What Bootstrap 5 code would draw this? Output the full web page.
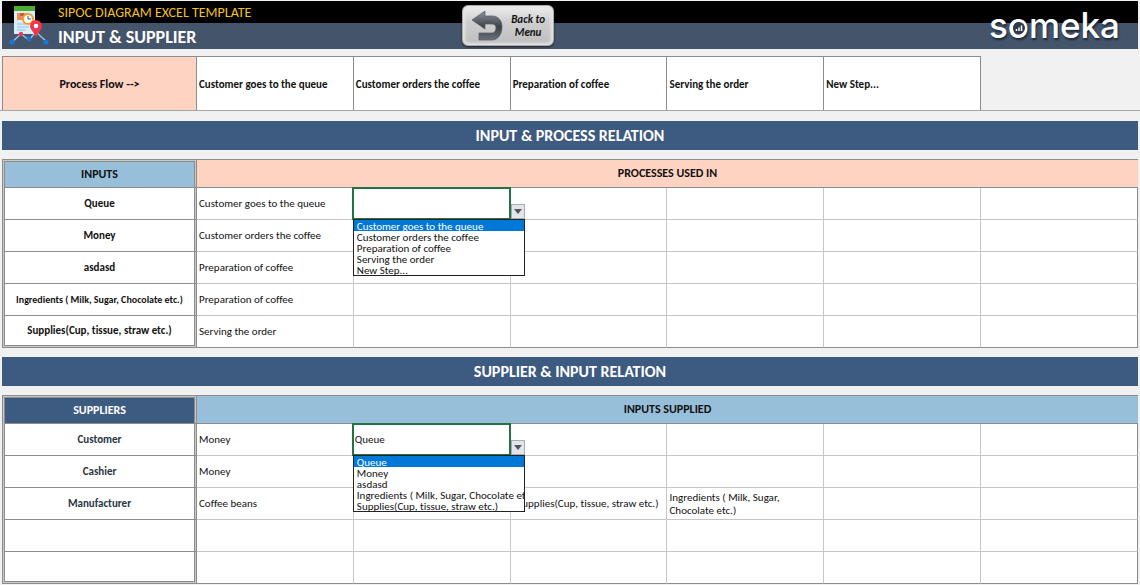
<!DOCTYPE html>
<html lang="en">
<head>
<meta charset="utf-8">
<meta name="viewport" content="width=device-width, initial-scale=1">
<title>SIPOC Diagram - Input &amp; Supplier</title>
<link href="https://cdn.jsdelivr.net/npm/bootstrap@5.3.0/dist/css/bootstrap.min.css" rel="stylesheet">
<style>
  body { font-family: Carlito, Calibri, Lato, sans-serif; font-size: 11px; line-height: 13px; color: #111; background: #f1f1f1; font-variant-ligatures: none; }
  .sheet { padding: 1px 2px 0; }
  .top-bar { height: 48px; background: linear-gradient(#000 22px, #44546a 22px); }
  .bar-start { width: 40.5%; }
  .doc-name { font-size: 14px; line-height: 23px; color: #f5c11c; }
  .page-name { font-size: 18px; line-height: 26px; color: #fff; }
  .doc-icon { width: 42px; height: 42px; margin: 3px 7px 0 7px; }
  .btn-back { width: 92px; height: 41px; margin-top: 4px; border-radius: 6px; border: 1px solid #aaa; font-size: 11px;
    background: linear-gradient(#eee, #cfcfcf 40%, #bdbdbd); box-shadow: inset 0 0 3px 2px #e6e6e6, 0 1px 2px #222; line-height: 13px; color: #111; }
  .btn-back svg { width: 32px; height: 32px; }
  .wordmark { font: 500 35px/48px Inter, sans-serif; color: #fff; margin-right: 18px; text-shadow: 1px 2px 2px #1d2838; }
  .wordmark svg { left: 5px; top: 18px; width: 12px; height: 12px; }
  .flow { margin: 7px -2px 10px; padding: 0 2px; border-bottom: 1px solid #a6a6a6; }
  .grid-table { table-layout: fixed; border-collapse: separate; border-spacing: 0; }
  .grid-table col:first-child { width: 195px; }
  .grid-table th, .grid-table td { padding: 0 2px; vertical-align: middle; border-right: 1px solid #c6c6c6; border-bottom: 1px solid #c6c6c6; }
  .grid-table.flow-table th { height: 54px; padding-top: 1px; border-color: #8c8c8c; border-bottom: 0; border-top: 1px solid #8c8c8c; background: #fff; }
  .flow-table th:first-child { border-left: 1px solid #8c8c8c; font-size: 12px; text-align: center; }
  .grid-table.flow-table th:first-child { background: #ffd3c1; }
  .grid-table.flow-table td { border: 0; }
  .band { font-size: 16px; line-height: 29px; background: #3d5a80; color: #fff; margin: 0 0 9px; }
  .relation { margin-bottom: 9px; }
  .relation thead th { height: 29px; border-top: 1px solid #8c8c8c; border-bottom-color: #8c8c8c; border-right: 0; font-size: 12px; text-align: center; }
  .relation tbody th, .relation tbody td { height: 32px; background: #fff; }
  .relation tbody tr:last-child > * { border-bottom-color: #8c8c8c; }
  .relation tbody td:last-child { border-right-color: #8c8c8c; }
  .relation tr > th:first-child { text-align: center; border: 0 solid #8c8c8c; border-width: 0 3px 1px; border-left-style: double; border-right-style: double; background-clip: padding-box; }
  .relation thead th:first-child { border-top: 3px double #8c8c8c; }
  .relation tbody tr:last-child > th:first-child { border-bottom: 3px double #8c8c8c; }
  .relation { background: #c8c8c8; }
  .bg-peach { background: #ffd3c1; }
  .bg-sky { background: #97bfd9; }
  .bg-navy { background: #3d5a80; color: #fff; }
  .fit-label { font-size: 10px; }
  .supplier-name { color: #2b3440; }
  .picker { inset: -1px -1px -1px -2px; border: 2px solid #217346; padding-left: 1px; z-index: 2; }
  .picker-btn { left: 100%; top: 15px; width: 14px; height: 15px; margin-left: 2px; padding: 0; border: 1px solid #a9adb5; background: #e1e5ec; line-height: 0; }
  .picker-list { left: -1px; top: 30px; width: 172px; height: 57px; border: 1px solid #222; border-radius: 0; padding: 0; margin: 0; background: #fff; overflow: hidden; font: inherit; color: #111; outline: 0; scrollbar-width: none; }
  .picker-list::-webkit-scrollbar { display: none; }
  .picker-list option { padding: 0 3px; height: 11px; min-height: 0; line-height: 11px; overflow: visible; white-space: nowrap; }
  .picker-list option:checked { background: #0078d7 linear-gradient(#0078d7, #0078d7); color: #fff; }
</style>
</head>
<body>
<div class="sheet">
  <header class="top-bar d-flex">
    <div class="bar-start d-flex">
      <svg class="doc-icon flex-shrink-0" viewBox="0 0 42 42" aria-hidden="true">
        <path d="M5 5h21v25H5z" fill="#d9eefb"/><path d="M5 2h21v5H5z" fill="#4caf2f"/>
        <path d="M8 9h10v7H8z" fill="#f28a55"/><path d="M11 9h4v3h-4z" fill="#c95b35"/>
        <path d="M8 20h9M8 23h12M8 26h9" stroke="#8bc2e8" stroke-width="1"/>
        <circle cx="19" cy="15" r="5" fill="#fff" stroke="#f59a2f" stroke-width="2"/><path d="M19 12v3h3" fill="none" stroke="#555"/>
        <path d="M3 38l9-8 8 6 7-8 11 10" fill="none" stroke="#9bbce0" stroke-width="1.5"/>
        <path d="M27 33c-3-6-6-8-6-11a6 6 0 0 1 12 0c0 3-3 5-6 11z" fill="#f0364f"/><circle cx="27" cy="22" r="2.3" fill="#fff"/>
        <g fill="#1976d2"><circle cx="3" cy="38" r="2.6"/><circle cx="20" cy="35" r="2.4"/><circle cx="37" cy="38" r="2.6"/></g><circle cx="12" cy="30" r="2.2" fill="#f0364f"/>
      </svg>
      <div><div class="doc-name">SIPOC DIAGRAM EXCEL TEMPLATE</div><h1 class="page-name fw-bold m-0">INPUT &amp; SUPPLIER</h1></div>
    </div>
    <button type="button" class="btn-back d-flex align-items-center p-0 ps-2">
      <svg viewBox="0 0 32 32" aria-hidden="true"><defs><linearGradient id="arrowFill" x2="0" y2="1"><stop offset="0" stop-color="#8d949c"/><stop offset=".55" stop-color="#3b4148"/><stop offset="1" stop-color="#6b7178"/></linearGradient></defs>
        <path d="M1 10L14 1v5h7c6 0 10 4 10 11s-4 13-10 13H8v-7h13c2 0 4-2 4-5s-2-4-4-4h-7v5z" fill="url(#arrowFill)" stroke="#555b62" stroke-width=".7"/></svg>
      <span class="flex-grow-1 fw-bold fst-italic text-center">Back to<br>Menu</span>
    </button>
    <div class="wordmark ms-auto">s<span class="position-relative">o<svg class="position-absolute" viewBox="0 0 12 12" aria-hidden="true"><circle cx="6" cy="6" r="6" fill="#2c3a50"/><path d="M3.5 9V7M6 9V5.500M8.500 9V3.500" stroke="#fff" stroke-width="1.500"/></svg></span>meka</div>
  </header>

  <div class="flow">
    <table class="grid-table flow-table w-100">
      <colgroup><col><col span="6"></colgroup>
      <tbody><tr><th scope="row">Process Flow --&gt;</th><th>Customer goes to the queue</th><th>Customer orders the coffee</th><th>Preparation of coffee</th><th>Serving the order</th><th>New Step...</th><td></td></tr></tbody>
    </table>
  </div>

  <h2 class="band fw-bold text-center">INPUT &amp; PROCESS RELATION</h2>
  <table class="grid-table relation w-100">
    <colgroup><col><col span="6"></colgroup>
    <thead><tr><th class="bg-sky" scope="col">INPUTS</th><th class="bg-peach" colspan="6" scope="colgroup">PROCESSES USED IN</th></tr></thead>
    <tbody>
      <tr><th scope="row">Queue</th><td>Customer goes to the queue</td>
        <td class="position-relative"><div class="picker position-absolute d-flex align-items-center">
          <button type="button" class="picker-btn position-absolute" aria-label="Open process list"><svg width="8" height="5" viewBox="0 0 8 5"><path d="M0 0h8L4 5z" fill="#555"/></svg></button>
          <select class="picker-list position-absolute" size="5" aria-label="Process used in"><option selected>Customer goes to the queue</option><option>Customer orders the coffee</option><option>Preparation of coffee</option><option>Serving the order</option><option>New Step...</option></select>
        </div></td><td></td><td></td><td></td><td></td></tr>
      <tr><th scope="row">Money</th><td>Customer orders the coffee</td><td></td><td></td><td></td><td></td><td></td></tr>
      <tr><th scope="row">asdasd</th><td>Preparation of coffee</td><td></td><td></td><td></td><td></td><td></td></tr>
      <tr><th scope="row" class="fit-label">Ingredients ( Milk, Sugar, Chocolate etc.)</th><td>Preparation of coffee</td><td></td><td></td><td></td><td></td><td></td></tr>
      <tr><th scope="row">Supplies(Cup, tissue, straw etc.)</th><td>Serving the order</td><td></td><td></td><td></td><td></td><td></td></tr>
    </tbody>
  </table>

  <h2 class="band fw-bold text-center">SUPPLIER &amp; INPUT RELATION</h2>
  <table class="grid-table relation w-100 mb-0">
    <colgroup><col><col span="6"></colgroup>
    <thead><tr><th class="bg-navy" scope="col">SUPPLIERS</th><th class="bg-sky" colspan="6" scope="colgroup">INPUTS SUPPLIED</th></tr></thead>
    <tbody>
      <tr><th scope="row" class="supplier-name">Customer</th><td>Money</td>
        <td class="position-relative"><div class="picker position-absolute d-flex align-items-center">Queue
          <button type="button" class="picker-btn position-absolute" aria-label="Open input list"><svg width="8" height="5" viewBox="0 0 8 5"><path d="M0 0h8L4 5z" fill="#555"/></svg></button>
          <select class="picker-list position-absolute" size="5" aria-label="Input supplied"><option selected>Queue</option><option>Money</option><option>asdasd</option><option>Ingredients ( Milk, Sugar, Chocolate etc.)</option><option>Supplies(Cup, tissue, straw etc.)</option></select>
        </div></td><td></td><td></td><td></td><td></td></tr>
      <tr><th scope="row" class="supplier-name">Cashier</th><td>Money</td><td></td><td></td><td></td><td></td><td></td></tr>
      <tr><th scope="row" class="supplier-name">Manufacturer</th><td>Coffee beans</td><td></td><td class="text-end pe-2">Supplies(Cup, tissue, straw etc.)</td><td>Ingredients ( Milk, Sugar, Chocolate etc.)</td><td></td><td></td></tr>
      <tr><th scope="row"></th><td></td><td></td><td></td><td></td><td></td><td></td></tr>
      <tr><th scope="row"></th><td></td><td></td><td></td><td></td><td></td><td></td></tr>
    </tbody>
  </table>
</div>
<script src="https://cdn.jsdelivr.net/npm/bootstrap@5.3.0/dist/js/bootstrap.bundle.min.js"></script>
</body>
</html>
